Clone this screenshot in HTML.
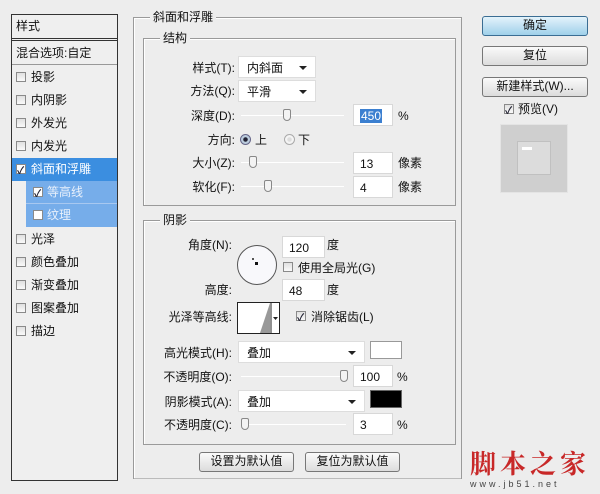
<!DOCTYPE html>
<html><head><meta charset="utf-8"><style>
*{margin:0;padding:0;box-sizing:border-box}
body{width:600px;height:494px;background:#ededed;font-family:"Liberation Sans","Noto Sans CJK SC",sans-serif;font-size:12px;color:#111;position:relative;overflow:hidden}
.a{position:absolute;white-space:nowrap;line-height:14px}
.r{text-align:right}
.box{position:absolute;border:1px solid #9a9a9a;box-shadow:1px 1px 0 #fff inset}
.ttl{position:absolute;background:#ededed;padding:0 3px;line-height:14px}
.cb{position:absolute;width:10px;height:10px;border:1px solid #8a8a8a;background:linear-gradient(#e0e0e0,#fafafa)}
.cbk::after{content:"✓";position:absolute;left:0;top:-3px;font-size:10px;color:#223;font-weight:bold}
.dd{position:absolute;background:#fff;border:1px solid #ddd;height:22px;padding-left:8px;line-height:22px}
.dd::after{content:"";position:absolute;right:8px;top:9px;border-left:4px solid transparent;border-right:4px solid transparent;border-top:4px solid #222}
.in{position:absolute;background:#fff;border:1px solid #d8d8d8;height:22px;padding-left:6px;line-height:22px}
.tr{position:absolute;height:1px;background:#aaa;border-bottom:1px solid #fff}
.th{position:absolute;width:8px;height:12px;border:1px solid #888;border-radius:2px 2px 4px 4px;background:#f3f3f3}
.btn{position:absolute;border:1px solid #777;border-radius:3px;background:linear-gradient(#fafafa,#dcdcdc);text-align:center;line-height:17px}
</style></head><body>

<div style="position:absolute;left:11px;top:14px;width:107px;height:467px;border:1px solid #333;background:#efefef"></div>
<div class="a" style="left:16px;top:19px">样式</div>
<div style="position:absolute;left:12px;top:38px;width:105px;height:3px;border-top:1px solid #333;border-bottom:1px solid #333"></div>
<div class="a" style="left:16px;top:46px">混合选项:自定</div>
<div style="position:absolute;left:12px;top:64px;width:105px;height:1px;background:#999"></div>

<div class="cb" style="left:16px;top:72px"></div><div class="a" style="left:31px;top:70px">投影</div>
<div class="cb" style="left:16px;top:95px"></div><div class="a" style="left:31px;top:93px">内阴影</div>
<div class="cb" style="left:16px;top:118px"></div><div class="a" style="left:31px;top:116px">外发光</div>
<div class="cb" style="left:16px;top:141px"></div><div class="a" style="left:31px;top:139px">内发光</div>
<div style="position:absolute;left:12px;top:158px;width:105px;height:23px;background:#3b8ee0"></div>
<div class="cb cbk" style="left:16px;top:164px;background:#fff"></div><div class="a" style="left:31px;top:162px;color:#fff">斜面和浮雕</div>
<div style="position:absolute;left:26px;top:181px;width:91px;height:46px;background:#76adea"></div>
<div style="position:absolute;left:26px;top:203px;width:91px;height:1px;background:#a8c8f0"></div>
<div class="cb cbk" style="left:33px;top:187px;background:#fff"></div><div class="a" style="left:47px;top:185px;color:#e8f0fb">等高线</div>
<div class="cb" style="left:33px;top:210px;background:#fff"></div><div class="a" style="left:47px;top:208px;color:#e8f0fb">纹理</div>
<div class="cb" style="left:16px;top:234px"></div><div class="a" style="left:31px;top:232px">光泽</div>
<div class="cb" style="left:16px;top:257px"></div><div class="a" style="left:31px;top:255px">颜色叠加</div>
<div class="cb" style="left:16px;top:280px"></div><div class="a" style="left:31px;top:278px">渐变叠加</div>
<div class="cb" style="left:16px;top:303px"></div><div class="a" style="left:31px;top:301px">图案叠加</div>
<div class="cb" style="left:16px;top:326px"></div><div class="a" style="left:31px;top:324px">描边</div>

<div class="box" style="left:133px;top:17px;width:329px;height:462px;border-bottom:none"></div>
<div class="ttl" style="left:150px;top:10px">斜面和浮雕</div>
<div style="position:absolute;left:134px;top:478px;width:327px;height:1px;background:#bbb"></div>

<div class="box" style="left:143px;top:38px;width:313px;height:168px"></div>
<div class="ttl" style="left:160px;top:31px">结构</div>
<div class="a r" style="left:160px;width:75px;top:61px">样式(T):</div>
<div class="dd" style="left:238px;top:56px;width:78px">内斜面</div>
<div class="a r" style="left:160px;width:75px;top:84px">方法(Q):</div>
<div class="dd" style="left:238px;top:80px;width:78px">平滑</div>
<div class="a r" style="left:160px;width:75px;top:109px">深度(D):</div>
<div class="tr" style="left:241px;top:115px;width:103px"></div>
<div class="th" style="left:283px;top:109px"></div>
<div class="in" style="left:353px;top:104px;width:40px"><span style="background:#3b7fd0;color:#fff;padding:0 1px">450</span></div>
<div class="a" style="left:398px;top:109px">%</div>
<div class="a r" style="left:160px;width:75px;top:133px">方向:</div>
<div style="position:absolute;left:240px;top:134px;width:11px;height:11px;border-radius:50%;border:1px solid #668;background:radial-gradient(#223 30%,#bcd 40%)"></div>
<div class="a" style="left:255px;top:133px">上</div>
<div style="position:absolute;left:284px;top:134px;width:11px;height:11px;border-radius:50%;border:1px solid #aaa;background:radial-gradient(#ddd 30%,#f4f4f4 40%)"></div>
<div class="a" style="left:298px;top:133px">下</div>
<div class="a r" style="left:160px;width:75px;top:156px">大小(Z):</div>
<div class="tr" style="left:241px;top:162px;width:103px"></div>
<div class="th" style="left:249px;top:156px"></div>
<div class="in" style="left:353px;top:152px;width:40px">13</div>
<div class="a" style="left:398px;top:156px">像素</div>
<div class="a r" style="left:160px;width:75px;top:180px">软化(F):</div>
<div class="tr" style="left:241px;top:186px;width:103px"></div>
<div class="th" style="left:264px;top:180px"></div>
<div class="in" style="left:353px;top:176px;width:40px">4</div>
<div class="a" style="left:398px;top:180px">像素</div>

<div class="box" style="left:143px;top:220px;width:313px;height:225px"></div>
<div class="ttl" style="left:160px;top:213px">阴影</div>
<div class="a r" style="left:160px;width:72px;top:238px">角度(N):</div>
<div style="position:absolute;left:237px;top:245px;width:40px;height:40px;border-radius:50%;border:1px solid #555;background:#f8f8fb"></div>
<div style="position:absolute;left:255px;top:262px;width:3px;height:3px;background:#111"></div>
<div style="position:absolute;left:252px;top:258px;width:2px;height:2px;background:#555"></div>
<div class="in" style="left:282px;top:236px;width:43px">120</div>
<div class="a" style="left:327px;top:238px">度</div>
<div class="cb" style="left:283px;top:262px"></div>
<div class="a" style="left:298px;top:261px">使用全局光(G)</div>
<div class="a r" style="left:160px;width:72px;top:283px">高度:</div>
<div class="in" style="left:282px;top:279px;width:43px">48</div>
<div class="a" style="left:327px;top:283px">度</div>
<div class="a r" style="left:150px;width:82px;top:310px">光泽等高线:</div>
<div style="position:absolute;left:237px;top:302px;width:43px;height:32px;border:1px solid #222;background:#fff"></div>
<svg style="position:absolute;left:238px;top:303px" width="41" height="30"><polygon points="22,30 32,0 32,30" fill="#999"/><line x1="33" y1="0" x2="33" y2="30" stroke="#222"/><polygon points="35,14 40,14 37.5,17" fill="#222"/></svg>
<div class="cb cbk" style="left:296px;top:311px"></div>
<div class="a" style="left:311px;top:310px">消除锯齿(L)</div>
<div class="a r" style="left:150px;width:82px;top:346px">高光模式(H):</div>
<div class="dd" style="left:238px;top:341px;width:127px">叠加</div>
<div style="position:absolute;left:370px;top:341px;width:32px;height:18px;border:1px solid #999;background:#fff"></div>
<div class="a r" style="left:150px;width:82px;top:370px">不透明度(O):</div>
<div class="tr" style="left:241px;top:376px;width:105px"></div>
<div class="th" style="left:340px;top:370px"></div>
<div class="in" style="left:353px;top:365px;width:40px">100</div>
<div class="a" style="left:397px;top:370px">%</div>
<div class="a r" style="left:150px;width:82px;top:395px">阴影模式(A):</div>
<div class="dd" style="left:238px;top:390px;width:127px">叠加</div>
<div style="position:absolute;left:370px;top:390px;width:32px;height:18px;border:1px solid #666;background:#000"></div>
<div class="a r" style="left:150px;width:82px;top:418px">不透明度(C):</div>
<div class="tr" style="left:241px;top:424px;width:105px"></div>
<div class="th" style="left:241px;top:418px"></div>
<div class="in" style="left:353px;top:413px;width:40px">3</div>
<div class="a" style="left:397px;top:418px">%</div>

<div class="btn" style="left:199px;top:452px;width:95px;height:20px">设置为默认值</div>
<div class="btn" style="left:305px;top:452px;width:95px;height:20px">复位为默认值</div>

<div class="btn" style="left:482px;top:16px;width:106px;height:20px;border-color:#3a6d93;background:linear-gradient(#e4f3fb,#9fd0ea)">确定</div>
<div class="btn" style="left:482px;top:46px;width:106px;height:20px">复位</div>
<div class="btn" style="left:482px;top:77px;width:106px;height:20px">新建样式(W)...</div>
<div class="cb cbk" style="left:504px;top:104px"></div>
<div class="a" style="left:518px;top:102px">预览(V)</div>
<div style="position:absolute;left:500px;top:124px;width:68px;height:69px;background:#cfcfcf;border:1px solid #e4e4e4"></div>
<div style="position:absolute;left:517px;top:141px;width:34px;height:34px;background:#dcdcdc;border:1px solid #c0c0c0"></div>
<div style="position:absolute;left:522px;top:147px;width:10px;height:3px;background:#fff"></div>

<div class="a" style="left:470px;top:448px;font-size:26px;line-height:30px;color:#c82828;font-weight:bold;letter-spacing:4px;font-family:'Noto Serif CJK SC',serif">脚本之家</div>
<div class="a" style="left:470px;top:479px;font-size:9px;line-height:10px;color:#444;letter-spacing:3px">www.jb51.net</div>
</body></html>
